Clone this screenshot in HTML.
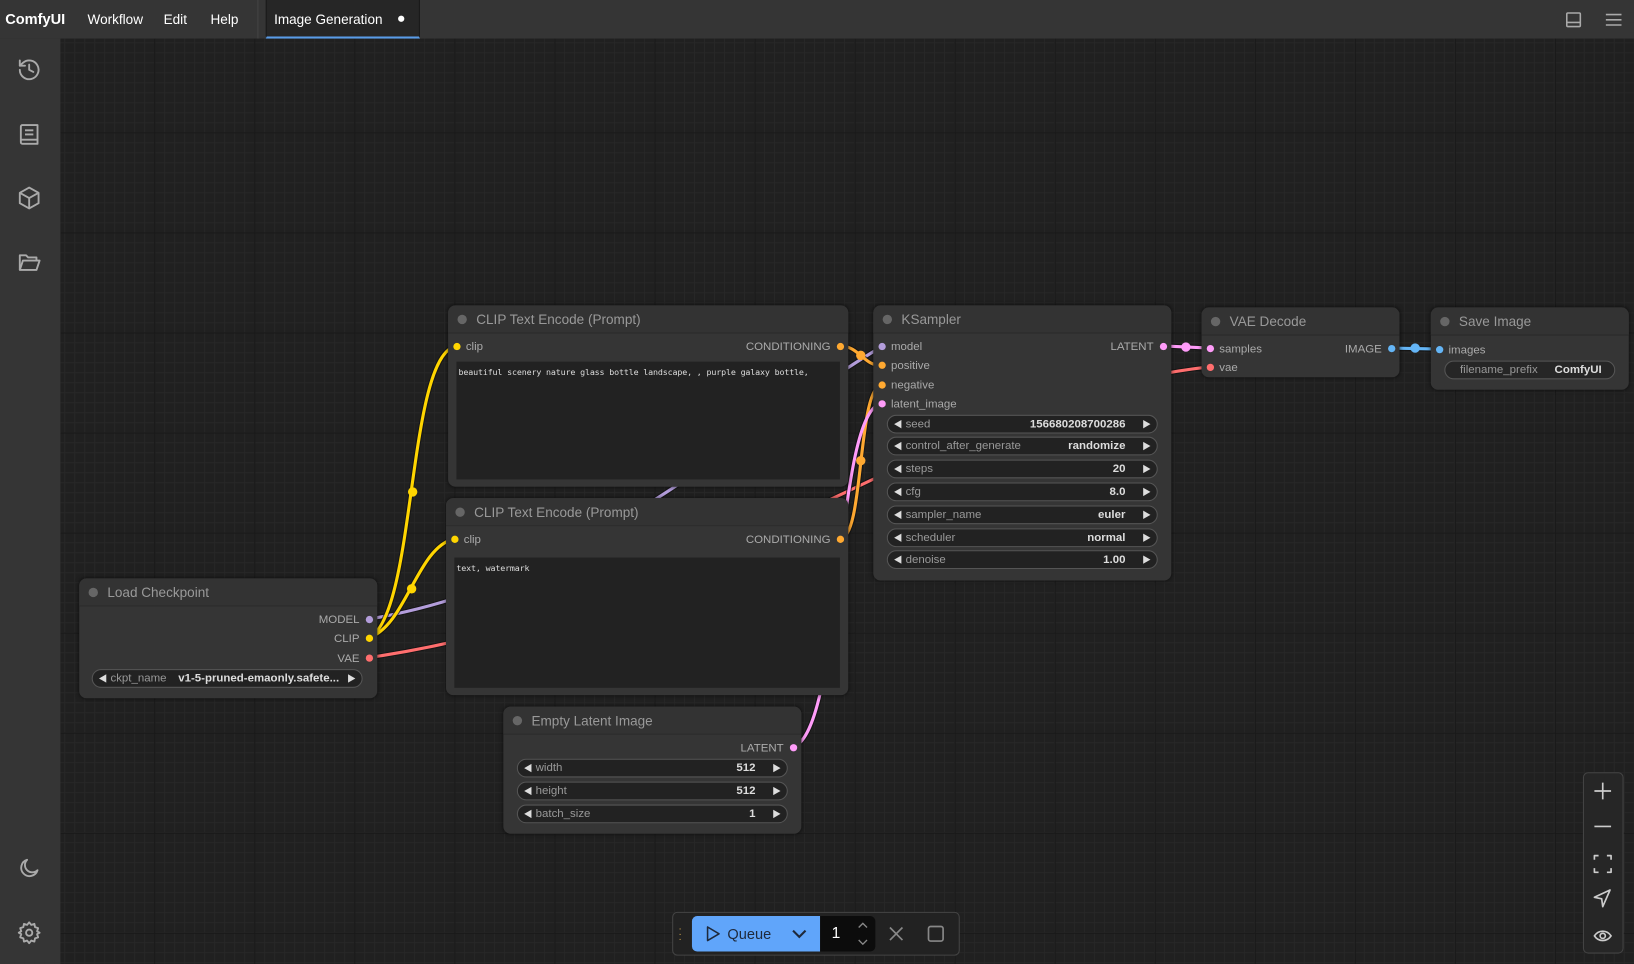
<!DOCTYPE html>
<html><head><meta charset="utf-8"><style>
html,body{margin:0;padding:0;background:#222;overflow:hidden;width:1634px;height:964px}
#w{position:absolute;left:0;top:0;width:1568px;height:925px;transform:scale(1.04209,1.04216);transform-origin:0 0;font-family:"Liberation Sans",Arial,sans-serif}
#canvas{position:absolute;left:58px;top:37px;right:0;bottom:0;background-color:#202020;
background-image:linear-gradient(#181818 1px,transparent 1px),linear-gradient(90deg,#181818 1px,transparent 1px),linear-gradient(#272727 1px,transparent 1px),linear-gradient(90deg,#272727 1px,transparent 1px);
background-size:96px 96px,96px 96px,9.6px 9.6px,9.6px 9.6px;background-position:-6px -6px}
#top{position:absolute;left:0;top:0;width:1568px;height:37px;background:#353535;color:#fff;font-size:13px}
#top span{position:absolute;top:11px}
#side{position:absolute;left:0;top:37px;width:58px;bottom:0;background:#353535}
.ic{position:absolute}
.node{position:absolute;background:#353535;border-radius:7px;box-shadow:0 0 4px rgba(0,0,0,.6)}
.tt{position:absolute;left:0;right:0;top:0;height:26px;border-bottom:1px solid #2a2a2a;border-radius:7px 7px 0 0;background:#333}
.tt .d{position:absolute;left:9px;top:9px;width:9px;height:9px;border-radius:50%;background:#666}
.tt span{position:absolute;left:27px;top:6px;color:#999;font-size:13px}
.sl{position:absolute;font-size:11px;color:#aaa;white-space:nowrap;margin-top:1px}
.dot{position:absolute;width:7px;height:7px;border-radius:50%}
.wg{position:absolute;height:16px;border:1px solid #555;border-radius:9px;background:#222;font-size:11px;color:#999;white-space:nowrap}
.wg .l{position:absolute;left:17px;top:2px}
.wg .v{position:absolute;right:30px;top:2px;color:#ddd;font-weight:bold}
.wg.ar:before{content:"";position:absolute;left:6px;top:4px;border-right:7px solid #ddd;border-top:4px solid transparent;border-bottom:4px solid transparent}
.wg.ar:after{content:"";position:absolute;right:6px;top:4px;border-left:7px solid #ddd;border-top:4px solid transparent;border-bottom:4px solid transparent}
.ta{position:absolute;background:#222;font-family:"DejaVu Sans Mono","Liberation Mono",monospace;font-size:8px;letter-spacing:-0.15px;color:#ddd;padding:6px 2px;box-sizing:border-box;white-space:nowrap;overflow:hidden}
</style></head><body><div id="w">
<div id="canvas"></div>
<svg style="position:absolute;left:0;top:0" width="1568" height="925" fill="none" stroke-linecap="round">
<g stroke="#111" stroke-width="5" opacity=".7">
<path d="M354 594 C560 560 700 420 847 332"/>
<path d="M354 631 C700 580 900 380 1161 352"/>
</g>
<g stroke-width="3">
<path stroke="#B39DDB" d="M354 594 C560 560 700 420 847 332"/>
<path stroke="#FF6E6E" d="M354 631 C700 580 900 380 1161 352"/>
</g>
<g stroke="#111" stroke-width="5" opacity=".7">
<path d="M354 612 C400 590 390 340 438 332"/>
<path d="M354 612 C390 600 400 525 436 517"/>
<path d="M806 332 C825 332 828 351 847 351"/>
<path d="M806 517 C830 517 822 369 847 369"/>
<path d="M761 717 C810 700 800 390 847 387"/>
<path d="M1116 332 L1161 334"/>
<path d="M1335 334 L1382 335"/>
</g>
<g stroke-width="3">
<path stroke="#FFD500" d="M354 612 C400 590 390 340 438 332"/>
<path stroke="#FFD500" d="M354 612 C390 600 400 525 436 517"/>
<path stroke="#FFA931" d="M806 332 C825 332 828 351 847 351"/>
<path stroke="#FFA931" d="M806 517 C830 517 822 369 847 369"/>
<path stroke="#FF9CF9" d="M761 717 C810 700 800 390 847 387"/>
<path stroke="#FF9CF9" d="M1116 332 L1161 334"/>
<path stroke="#64B5F6" d="M1335 334 L1382 335"/>
</g>
<circle cx="396" cy="472" r="4.5" fill="#FFD500"/><circle cx="395" cy="565" r="4.5" fill="#FFD500"/>
<circle cx="826" cy="341" r="4.5" fill="#FFA931"/><circle cx="826" cy="442" r="4.5" fill="#FFA931"/>
<circle cx="1138" cy="333" r="4.5" fill="#FF9CF9"/><circle cx="1358" cy="334" r="4.5" fill="#64B5F6"/>
</svg>

<div class="node" style="left:430px;top:293px;width:384px;height:174px">
<div class="tt"><div class="d"></div><span>CLIP Text Encode (Prompt)</span></div>
<div class="dot" style="left:5px;top:36px;background:#FFD500"></div><div class="sl" style="left:17px;top:33px">clip</div>
<div class="sl" style="right:17px;top:33px">CONDITIONING</div><div class="dot" style="right:4px;top:36px;background:#FFA931"></div>
<div class="ta" style="left:8px;top:54px;width:368px;height:113px">beautiful scenery nature glass bottle landscape, , purple galaxy bottle,</div>
</div>
<div class="node" style="left:428px;top:478px;width:386px;height:189px">
<div class="tt"><div class="d"></div><span>CLIP Text Encode (Prompt)</span></div>
<div class="dot" style="left:5px;top:36px;background:#FFD500"></div><div class="sl" style="left:17px;top:33px">clip</div>
<div class="sl" style="right:17px;top:33px">CONDITIONING</div><div class="dot" style="right:4px;top:36px;background:#FFA931"></div>
<div class="ta" style="left:8px;top:57px;width:370px;height:125px">text, watermark</div>
</div>
<div class="node" style="left:76px;top:555px;width:286px;height:115px">
<div class="tt"><div class="d"></div><span>Load Checkpoint</span></div>
<div class="sl" style="right:17px;top:33px">MODEL</div><div class="dot" style="right:4px;top:36px;background:#B39DDB"></div>
<div class="sl" style="right:17px;top:51px">CLIP</div><div class="dot" style="right:4px;top:54px;background:#FFD500"></div>
<div class="sl" style="right:17px;top:70px">VAE</div><div class="dot" style="right:4px;top:73px;background:#FF6E6E"></div>
<div class="wg ar" style="left:12px;top:87px;width:258px"><span class="l">ckpt_name</span><span class="v" style="left:82px;right:auto">v1-5-pruned-emaonly.safete...</span></div>
</div>
<div class="node" style="left:838px;top:293px;width:286px;height:264px">
<div class="tt"><div class="d"></div><span>KSampler</span></div>
<div class="dot" style="left:5px;top:36px;background:#B39DDB"></div><div class="sl" style="left:17px;top:33px">model</div>
<div class="dot" style="left:5px;top:54px;background:#FFA931"></div><div class="sl" style="left:17px;top:51px">positive</div>
<div class="dot" style="left:5px;top:73px;background:#FFA931"></div><div class="sl" style="left:17px;top:70px">negative</div>
<div class="dot" style="left:5px;top:91px;background:#FF9CF9"></div><div class="sl" style="left:17px;top:88px">latent_image</div>
<div class="sl" style="right:17px;top:33px">LATENT</div><div class="dot" style="right:4px;top:36px;background:#FF9CF9"></div>
<div class="wg ar" style="left:13px;top:105px;width:258px"><span class="l">seed</span><span class="v">156680208700286</span></div>
<div class="wg ar" style="left:13px;top:126px;width:258px"><span class="l">control_after_generate</span><span class="v">randomize</span></div>
<div class="wg ar" style="left:13px;top:148px;width:258px"><span class="l">steps</span><span class="v">20</span></div>
<div class="wg ar" style="left:13px;top:170px;width:258px"><span class="l">cfg</span><span class="v">8.0</span></div>
<div class="wg ar" style="left:13px;top:192px;width:258px"><span class="l">sampler_name</span><span class="v">euler</span></div>
<div class="wg ar" style="left:13px;top:214px;width:258px"><span class="l">scheduler</span><span class="v">normal</span></div>
<div class="wg ar" style="left:13px;top:235px;width:258px"><span class="l">denoise</span><span class="v">1.00</span></div>
</div>
<div class="node" style="left:1153px;top:295px;width:190px;height:67px">
<div class="tt"><div class="d"></div><span>VAE Decode</span></div>
<div class="dot" style="left:5px;top:36px;background:#FF9CF9"></div><div class="sl" style="left:17px;top:33px">samples</div>
<div class="dot" style="left:5px;top:54px;background:#FF6E6E"></div><div class="sl" style="left:17px;top:51px">vae</div>
<div class="sl" style="right:17px;top:33px">IMAGE</div><div class="dot" style="right:4px;top:36px;background:#64B5F6"></div>
</div>
<div class="node" style="left:1373px;top:295px;width:190px;height:79px">
<div class="tt"><div class="d"></div><span>Save Image</span></div>
<div class="dot" style="left:5px;top:37px;background:#64B5F6"></div><div class="sl" style="left:17px;top:34px">images</div>
<div class="wg" style="left:13px;top:51px;width:162px;background:#262626"><span class="l" style="left:14px">filename_prefix</span><span class="v" style="right:12px">ComfyUI</span></div>
</div>
<div class="node" style="left:483px;top:678px;width:286px;height:122px">
<div class="tt"><div class="d"></div><span>Empty Latent Image</span></div>
<div class="sl" style="right:17px;top:33px">LATENT</div><div class="dot" style="right:4px;top:36px;background:#FF9CF9"></div>
<div class="wg ar" style="left:13px;top:50px;width:258px"><span class="l">width</span><span class="v">512</span></div>
<div class="wg ar" style="left:13px;top:72px;width:258px"><span class="l">height</span><span class="v">512</span></div>
<div class="wg ar" style="left:13px;top:94px;width:258px"><span class="l">batch_size</span><span class="v">1</span></div>
</div>

<div id="top">
<span style="left:5px;font-weight:bold;font-size:14px;top:10px">ComfyUI</span>
<span style="left:84px">Workflow</span><span style="left:157px">Edit</span><span style="left:202px">Help</span>
<div style="position:absolute;left:247px;top:0;width:1px;height:37px;background:#444"></div>
<div style="position:absolute;left:255px;top:0;width:146px;height:35px;background:#262626;border-bottom:2px solid #5a9ce8;border-left:1px solid #1a1a1a;border-right:1px solid #1a1a1a"></div>
<span style="left:263px">Image Generation</span>
<div style="position:absolute;left:382px;top:15px;width:6px;height:6px;border-radius:50%;background:#fff"></div>
<svg class="ic" style="left:1502px;top:11px" width="16" height="16" fill="none" stroke="#aaa" stroke-width="1.5"><rect x="1.5" y="1.5" width="13" height="13" rx="1"/><path d="M1.5 10.5h13"/></svg>
<svg class="ic" style="left:1540px;top:11px" width="16" height="16" fill="none" stroke="#aaa" stroke-width="1.5"><path d="M1 3h15M1 8h15M1 13h15"/></svg>
</div>
<div id="side">
<svg class="ic" style="left:16px;top:18px" width="24" height="24" fill="none" stroke="#aaa" stroke-width="1.8" stroke-linecap="round" stroke-linejoin="round"><path d="M3 12a9 9 0 1 0 3-6.7L3 8"/><path d="M3 3v5h5"/><path d="M12 7v5l4 2"/></svg>
<svg class="ic" style="left:16px;top:80px" width="24" height="24" fill="none" stroke="#aaa" stroke-width="1.8" stroke-linejoin="round"><path d="M4 19.5V4.5A1.5 1.5 0 0 1 5.5 3H20v18H5.5A1.5 1.5 0 0 1 4 19.5zM4 17h16M8 8h8M8 12h8"/></svg>
<svg class="ic" style="left:16px;top:141px" width="24" height="24" fill="none" stroke="#aaa" stroke-width="1.8" stroke-linejoin="round"><path d="M12 2l9 5v10l-9 5-9-5V7z"/><path d="M3 7l9 5 9-5M12 12v10"/></svg>
<svg class="ic" style="left:16px;top:203px" width="24" height="24" fill="none" stroke="#aaa" stroke-width="1.8" stroke-linejoin="round"><path d="M3 19V5h6l2 2h8v3"/><path d="M3 19l3-9h16l-3 9z"/></svg>
<svg class="ic" style="left:16px;top:784px" width="24" height="24" fill="none" stroke="#aaa" stroke-width="1.8" stroke-linejoin="round"><path d="M20 14A8 8 0 1 1 10 4a6.5 6.5 0 0 0 10 10z"/></svg>
<svg class="ic" style="left:16px;top:846px" width="24" height="24" fill="none" stroke="#aaa" stroke-width="1.8" stroke-linejoin="round"><circle cx="12" cy="12" r="3"/><path d="M12 2l2 2.5 3-1 .6 3.1 3 1-1 3 2.4 1.4-2.4 1.4 1 3-3 1-.6 3.1-3-1L12 22l-2-2.5-3 1-.6-3.1-3-1 1-3L2 12l2.4-1.4-1-3 3-1L7 3.5l3 1z"/></svg>
</div>

<div style="position:absolute;left:645px;top:875px;width:276px;height:42px;border:1px solid #444;border-radius:5px;background:#222;box-sizing:border-box"></div>
<div style="position:absolute;left:651px;top:889px;color:#c9a04a;font-size:10px;line-height:5px">·<br>·<br>·</div>
<div style="position:absolute;left:664px;top:879px;width:123px;height:34px;background:#60a5fa;border-radius:5px 0 0 5px"></div>
<svg class="ic" style="left:676px;top:888px" width="16" height="16" fill="none" stroke="#1e293b" stroke-width="1.5" stroke-linejoin="round"><path d="M3 1.5v13l11-6.5z"/></svg>
<div style="position:absolute;left:698px;top:888px;font-size:14px;color:#1e293b">Queue</div>
<svg class="ic" style="left:759px;top:889px" width="16" height="14" fill="none" stroke="#1e293b" stroke-width="2"><path d="M2 4l6 6 6-6"/></svg>
<div style="position:absolute;left:787px;top:879px;width:53px;height:34px;background:#0c0c0c;border-radius:0 5px 5px 0"></div>
<div style="position:absolute;left:798px;top:887px;font-size:15px;color:#fff">1</div>
<svg class="ic" style="left:821px;top:882px" width="14" height="28" fill="none" stroke="#888" stroke-width="1.3"><path d="M3 8l4-4 4 4M3 20l4 4 4-4"/></svg>
<svg class="ic" style="left:852px;top:888px" width="16" height="16" fill="none" stroke="#888" stroke-width="1.6"><path d="M2 2l12 12M14 2L2 14"/></svg>
<svg class="ic" style="left:889px;top:887px" width="18" height="18" fill="none" stroke="#888" stroke-width="1.6"><rect x="2" y="2" width="14" height="14" rx="2"/></svg>

<div style="position:absolute;left:1519px;top:741px;width:39px;height:174px;border:1px solid #444;border-radius:5px;background:#262626;box-sizing:border-box"></div>
<svg class="ic" style="left:1529px;top:750px" width="18" height="160" fill="none" stroke="#ccc" stroke-width="1.6" stroke-linejoin="round">
<path d="M9 1v16M1 9h16"/>
<path d="M1 43h16"/>
<path d="M1 75v-4h4M13 71h4v4M17 83v4h-4M5 87H1v-4"/>
<path d="M16 104L1 111l7 1.5 1 7.5z"/>
<path d="M1 148c4-6 12-6 16 0c-4 6-12 6-16 0z"/><circle cx="9" cy="148" r="2.5"/>
</svg>
</div></body></html>
